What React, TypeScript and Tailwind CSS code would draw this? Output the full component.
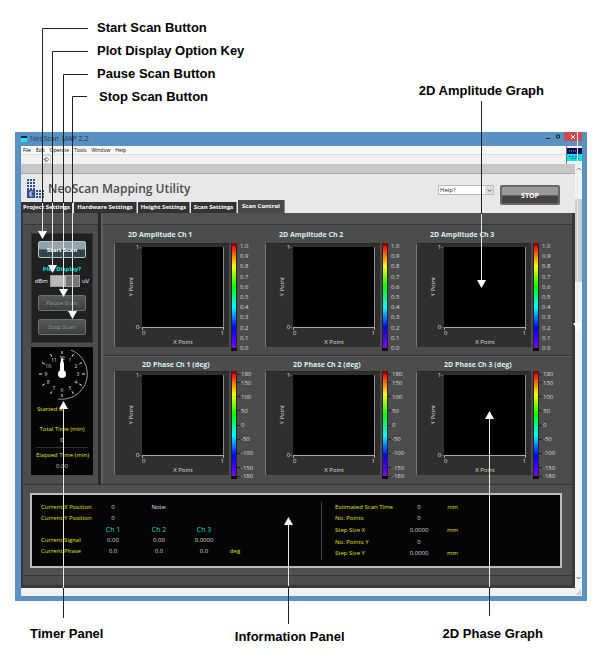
import { Fragment } from 'react'
import clsx from 'clsx'

const MENU = ['File', 'Edit', 'Operate', 'Tools', 'Window', 'Help']

const TABS = [
  { label: 'Project Settings', width: 'w-[52px]' },
  { label: 'Hardware Settings', width: 'w-[63px]' },
  { label: 'Height Settings', width: 'w-[52px]' },
  { label: 'Scan Settings', width: 'w-[46px]' },
  { label: 'Scan Control', width: 'w-[47px]', active: true },
]

const AMPLITUDE_SCALE = [1, 0.9, 0.8, 0.7, 0.6, 0.5, 0.4, 0.3, 0.2, 0.1, 0]
const PHASE_SCALE = [180, 150, 100, 50, 0, -50, -100, -150, -180]

const SIGNALS = [
  { label: 'Current Signal', values: ['0.00', '0.00', '0.0000'], unit: '' },
  { label: 'Current Phase', values: ['0.0', '0.0', '0.0'], unit: 'deg' },
]

const ESTIMATES = [
  { label: 'Estimated Scan Time', value: '0', unit: 'min' },
  { label: 'No. Points', value: '0', unit: '' },
  { label: 'Step Size X', value: '0.0000', unit: 'mm' },
  { label: 'No. Points Y', value: '0', unit: '' },
  { label: 'Step Size Y', value: '0.0000', unit: 'mm' },
]

function Logo() {
  const dots = []
  for (let row = 0; row < 4; row++) {
    for (let col = 0; col < 3; col++) {
      dots.push(<rect key={`a${row}${col}`} x={1 + col * 3} y={row * 3} width="2" height="2" />)
      // lower block is one row shorter than the tower on the left
      if (row < 3) {
        dots.push(<rect key={`b${row}${col}`} x={10 + col * 3} y={11 + row * 3} width="2" height="2" />)
      }
    }
  }
  return (
    <svg width="19" height="20" viewBox="0 0 19 20" className="shrink-0" fill="#2c4f96" aria-hidden="true">
      {dots}
      <rect x="1" y="11" width="8" height="8" />
      <path d="M6.500 13H4v4h2.500M4 15h2" stroke="#e6e6e6" fill="none" />
    </svg>
  )
}

function Clock() {
  const hours = [1, 2, 3, 4, 5, 6, 7, 8, 9, 10, 11, 12]
  return (
    <svg width="56" height="54" viewBox="-28 -27 56 54" role="img" aria-label="Clock">
      <path d="M9-24A25.500 25.500 0 0 1 -4 25" fill="none" stroke="#999" />
      {hours.map((h) => {
        const a = (h * Math.PI) / 6
        const x = Math.sin(a)
        const y = -Math.cos(a)
        return (
          <Fragment key={h}>
            <line x1={x * 20} y1={y * 20} x2={x * 23} y2={y * 23} stroke="#eee" />
            <text x={x * 16} y={y * 16 + 2} fill="#ddd" fontSize="5" textAnchor="middle">
              {h}
            </text>
          </Fragment>
        )
      })}
      <path d="M0-18L2-10V0H-2V-10Z" fill="#fff" />
      <circle r="4" fill="#fff" />
    </svg>
  )
}

function TitleBar() {
  return (
    <div className="flex h-[14px] items-center justify-between pl-[6px] text-[#1f3550]">
      <div className="flex items-center gap-[3px]">
        <svg width="6" height="6" aria-hidden="true">
          <rect width="6" height="6" fill="#00265c" />
          <rect y="2" width="6" height="4" fill="#18e4ef" />
        </svg>
        <span className="text-[7px]">NeoScan</span>
        <span className="text-[7px]">MAP 2.2</span>
      </div>
      <div className="flex h-full items-start">
        <button aria-label="Minimize" className="flex h-[9px] w-[11px] items-center justify-center">
          <svg width="4" height="4"><path d="M0 3.500h4" stroke="#1c2b3c" /></svg>
        </button>
        <button aria-label="Maximize" className="flex h-[9px] w-[11px] items-center justify-center">
          <svg width="5" height="5"><path d="M.5 1h3v3h-3z" fill="none" stroke="#1c2b3c" /></svg>
        </button>
        <button aria-label="Close" className="mr-[5px] flex h-[9px] w-[18px] items-center justify-center bg-[#cc4c4e]">
          <svg width="4" height="4"><path d="M0 0l4 4M4 0l-4 4" stroke="#fff" /></svg>
        </button>
      </div>
    </div>
  )
}

function MenuBar() {
  return (
    <div className="flex h-[18px] bg-[#f1f1f1]">
      <div className="flex-1">
        <nav className="flex h-[9px] items-center gap-[5px] border-b border-[#dedede] bg-[#f8f8f8] pl-[2px] text-[5px] leading-[8px] text-black">
          {MENU.map((item) => (
            <button key={item}>{item}</button>
          ))}
        </nav>
        <button aria-label="Run" className="ml-[21px] flex size-[9px] items-center justify-center border border-[#ccc] bg-white">
          <svg width="7" height="7">
            <path d="M1 3h2V1l3 2.500-3 2.500V4H1z" fill="none" stroke="#444" strokeWidth=".7" />
          </svg>
        </button>
      </div>
      <svg width="16" height="18" className="shrink-0" aria-hidden="true">
        <path d="M0 0h1v18H0z" fill="#777" />
        <path d="M1 2h15v7H1z" fill="#070750" />
        <path d="M1 8h15v7H1z" fill="#00e0ed" />
        <path d="M3 5h10" stroke="#a9a9dc" strokeDasharray="1 1" />
        <path d="M3 10.500h9M5 12.500h8" stroke="#08717c" strokeDasharray="2 1" />
      </svg>
    </div>
  )
}

function Header() {
  return (
    <header className="bg-[#e8e8e8]">
      <div className="h-[10px] border-b border-[#aaa] bg-[#c6c6c6]" />
      <div className="flex h-[39px]">
        <div className="flex flex-1 flex-col justify-between">
          <div className="flex items-center gap-[3px] pt-[5px] pl-[5px]">
            <Logo />
            <h1 className="text-[12px] leading-[18px] font-semibold text-[#4d4d4d]">NeoScan Mapping Utility</h1>
          </div>
          <div role="tablist" className="flex items-end gap-px">
            {TABS.map((tab) => (
              <button
                key={tab.label}
                role="tab"
                aria-selected={!!tab.active}
                className={clsx(
                  'border-r border-[#888] text-center text-[6px] font-bold whitespace-nowrap text-white',
                  tab.width,
                  tab.active ? 'h-[13px] bg-[#484848]' : 'h-[11px] bg-[#323232]',
                )}
              >
                {tab.label}
              </button>
            ))}
          </div>
        </div>
        <div className="flex items-start gap-[6px] pt-[11px] pr-[15px]">
          <select
            aria-label="Help topic"
            className="h-[10px] w-[56px] appearance-none border border-[#bbb] bg-white bg-[linear-gradient(#ddd,#ddd)] bg-[length:8px_100%] bg-right bg-no-repeat pl-px text-[6px] leading-[8px] text-[#222]"
          >
            <option>Help?</option>
          </select>
          <svg width="5" height="4" className="mt-[4px] -ml-[13px]" aria-hidden="true">
            <path d="M.5.5l2 2 2-2" fill="none" stroke="#555" />
          </svg>
          <button className="ml-[2px] h-[20px] w-[60px] rounded-[2px] border-2 border-[#686868] bg-linear-to-b from-[#999] from-50% to-[#444] to-55% pt-[2px] text-[7px] font-bold text-white">
            STOP
          </button>
        </div>
      </div>
    </header>
  )
}

function ScanControls() {
  return (
    <section className="flex h-[110px] flex-col items-center border border-[#333] bg-[#202020] pt-[7px] text-[6px] leading-[8px] text-white">
      <button className="h-[17px] w-[48px] rounded-[2px] border border-[#b2c4cc] bg-linear-to-b from-[#92a2aa] from-45% to-[#32434d] to-55% font-bold">
        Start Scan
      </button>
      <label htmlFor="plot-display" className="mt-[7px] text-[6px] font-bold text-[#00e6e6]">
        Plot Display?
      </label>
      <div className="mt-[2px] flex items-center gap-[2px]">
        <span>dBm</span>
        <input
          id="plot-display"
          type="range"
          min="0"
          max="1"
          defaultValue="0"
          className="h-[12px] w-[30px] appearance-none border border-[#999] bg-[#777] [&::-webkit-slider-thumb]:h-[10px] [&::-webkit-slider-thumb]:w-[15px] [&::-webkit-slider-thumb]:appearance-none [&::-webkit-slider-thumb]:bg-[#b8b8b8]"
        />
        <span>uV</span>
      </div>
      <button disabled className="mt-[8px] h-[16px] w-[48px] rounded-[2px] border border-[#6d7171] bg-linear-to-b from-[#555959] to-[#3c4040] text-[#929696]">
        Pause Scan
      </button>
      <button disabled className="mt-[8px] h-[16px] w-[48px] rounded-[2px] border border-[#6d7171] bg-linear-to-b from-[#555959] to-[#3c4040] text-[#929696]">
        Stop Scan
      </button>
    </section>
  )
}

function TimerPanel() {
  return (
    <section className="flex h-[128px] flex-col items-center bg-[#050505] text-[6px] leading-[8px] text-[#e2e200]">
      <Clock />
      <p className="w-full pt-[4px] pl-[6px]">Started at</p>
      <p className="mt-[12px]">Total Time (min)</p>
      <p className="mt-[3px] text-white">0</p>
      <p className="mt-[3px] w-[52px] border-t border-[#333] pt-[3px] text-center whitespace-nowrap">
        Elapsed Time (min)
      </p>
      <p className="mt-[3px] text-[#ccc]">0.00</p>
    </section>
  )
}

interface PlotProps {
  title: string
  scale: number[]
  phase?: boolean
}

function Plot({ title, scale, phase }: PlotProps) {
  return (
    <figure className="flex flex-col pr-[8px] text-[6px] leading-[6px] text-[#ddd]">
      <figcaption
        className={clsx(
          'pt-px text-[7px] leading-[10px] font-bold text-[#d4f2f2]',
          phase ? 'h-[12px] pl-[28px]' : 'h-[14px] pl-[14px]',
        )}
      >
        {title}
      </figcaption>
      <div className="flex">
        <div className="flex h-[104px] flex-1 border-t border-l border-t-[#262626] border-l-[#777] bg-[#2f2f2f] pt-[3px] pr-[5px]">
          <div className="flex h-[80px] w-[19px] items-center justify-end">
            <span className="rotate-180 [writing-mode:vertical-rl]">Y Point</span>
          </div>
          <div className="-mt-[3px] flex h-[86px] w-[8px] flex-col justify-between pr-px text-right">
            <span>1-</span>
            <span>0-</span>
          </div>
          <div className="flex flex-1 flex-col">
            <div className="h-[80px] border-r border-[#888] bg-black" />
            <div className="h-[3px] border-t border-r border-l border-[#aaa]" />
            <div className="flex justify-between">
              <span>0</span>
              <span>1</span>
            </div>
            <span className="pt-[3px] text-center">X Point</span>
          </div>
        </div>
        {/* colour ramp with its scale */}
        <div className="ml-[2px] h-[108px] w-[6px] border-x border-t-3 border-b-3 border-x-[#222] border-t-[#8e0000] border-b-black bg-[linear-gradient(#ff0000,#ff7f00,#ffff00_20%,#00ff00_40%,#00ffff_60%,#0000ff_80%,#8000ff)]" />
        <div className={clsx('flex w-[20px] flex-col pt-[3px] pb-[3px]', !phase && 'pl-[3px]')}>
          {scale.map((value, i) => (
            <Fragment key={value}>
              {i > 0 && <div style={{ flexGrow: Math.abs(scale[i - 1] - value) }} />}
              <div className="flex h-0 items-center gap-px">
                {phase && <span className="h-px w-[3px] bg-[#222]" />}
                <span>{phase ? value : value.toFixed(1)}</span>
              </div>
            </Fragment>
          ))}
        </div>
      </div>
    </figure>
  )
}

function InformationPanel() {
  return (
    <section className="flex h-[75px] border-2 border-[#bbb] bg-[#050505] text-[6px] leading-[8px] text-[#ddd]">
      <table className="mt-[7px] ml-[9px] h-[54px] w-[203px] table-fixed text-center">
        <colgroup>
          <col className="w-[49px]" />
          <col className="w-[46px]" />
          <col className="w-[46px]" />
          <col className="w-[44px]" />
          <col />
        </colgroup>
        <tbody>
          <tr>
            <th scope="row" className="text-left font-normal whitespace-nowrap text-[#e2e200]">Current X Position</th>
            <td>0</td>
            <td className="text-[#c8f0f0]">Note:</td>
          </tr>
          <tr>
            <th scope="row" className="text-left font-normal whitespace-nowrap text-[#e2e200]">Current Y Position</th>
            <td>0</td>
          </tr>
          <tr className="align-bottom text-[7px] text-[#00dada]">
            <td />
            <th scope="col" className="font-normal">Ch 1</th>
            <th scope="col" className="font-normal">Ch 2</th>
            <th scope="col" className="font-normal">Ch 3</th>
          </tr>
          {SIGNALS.map((row) => (
            <tr key={row.label}>
              <th scope="row" className="text-left font-normal text-[#e2e200]">{row.label}</th>
              {row.values.map((value, i) => (
                <td key={i}>{value}</td>
              ))}
              <td className="text-[#e2e200]">{row.unit}</td>
            </tr>
          ))}
        </tbody>
      </table>
      <div className="mt-[7px] ml-[77px] h-[58px] w-px bg-[#444]" />
      <table className="mt-[6px] ml-[13px] h-[58px] w-[130px] table-fixed text-center">
        <colgroup>
          <col className="w-[63px]" />
          <col className="w-[42px]" />
          <col />
        </colgroup>
        <tbody>
          {ESTIMATES.map((row) => (
            <tr key={row.label}>
              <th scope="row" className="text-left font-normal whitespace-nowrap text-[#e2e200]">{row.label}</th>
              <td>{row.value}</td>
              <td className="text-[#e2e200]">{row.unit}</td>
            </tr>
          ))}
        </tbody>
      </table>
    </section>
  )
}

function ScrollBar() {
  return (
    <div className="flex w-[7px] flex-col items-center bg-[#f4f4f4] pt-[3px]">
      <svg width="5" height="4" aria-hidden="true"><path d="M.5 3l2-2 2 2" fill="none" stroke="#555" /></svg>
      <div className="mt-[28px] h-[83px] w-full bg-[#cdcdcd]" />
      <div className="flex-1" />
      <svg width="5" height="4" className="mb-[8px]" aria-hidden="true"><path d="M.5 1l2 2 2-2" fill="none" stroke="#555" /></svg>
    </div>
  )
}

function ScanWindow() {
  return (
    <main className="mr-[13px] ml-[15px] bg-[#5b91c1] pb-[5px] font-['Open_Sans','Noto_Sans',sans-serif]">
      <TitleBar />
      <div className="mr-[5px] ml-[6px]">
        <MenuBar />
        <div className="flex">
          <div className="min-w-0 flex-1">
            <Header />
            <div className="border-r-3 border-b-3 border-l-2 border-[#35383d] bg-[#4c4c4c]">
              <div className="flex">
                <div className="w-[78px] border-r-3 border-[#292929]">
                  <div className="h-[12px] border-b border-[#363636] bg-[#525252]" />
                  <div className="flex flex-col gap-[4px] pt-[8px] pr-[5px] pb-[9px] pl-[8px]">
                    <ScanControls />
                    <TimerPanel />
                  </div>
                </div>
                <div className="flex-1 border-l-2 border-[#606060]">
                  <div className="h-[12px] border-b border-[#363636] bg-[#525252]" />
                  <div className="grid grid-cols-3 border-b border-[#363636] pt-[4px] pr-[5px] pb-[4px] pl-[11px]">
                    {[1, 2, 3].map((ch) => (
                      <Plot key={ch} title={`2D Amplitude Ch ${ch}`} scale={AMPLITUDE_SCALE} />
                    ))}
                  </div>
                  <div className="grid grid-cols-3 border-t border-[#5a5a5a] pt-[2px] pr-[5px] pl-[11px]">
                    {[1, 2, 3].map((ch) => (
                      <Plot key={ch} title={`2D Phase Ch ${ch} (deg)`} scale={PHASE_SCALE} phase />
                    ))}
                  </div>
                </div>
              </div>
              <div className="border-t border-[#333] bg-[#505050] pt-[8px] pr-[10px] pb-[7px] pl-[7px]">
                <InformationPanel />
              </div>
              <div className="h-[10px] border-t border-[#363636]" />
            </div>
          </div>
          <ScrollBar />
        </div>
        <div className="flex h-[8px] justify-end bg-[#f1f1f1]">
          <svg width="7" height="8" aria-hidden="true"><path d="M6 1v6H1z" fill="#ccc" /></svg>
        </div>
      </div>
    </main>
  )
}

// Leader lines run black over the page and white over the dark panels
function Leaders() {
  return (
    <svg width="600" height="666" className="pointer-events-none absolute top-0 left-0" fill="none" aria-hidden="true">
      <g stroke="#222">
        <path d="M88 28.500H42.500V203M88 51.500H52.500V203M88 74.500H63.500V203M87 96.500H72.500V203" />
        <path d="M481.500 101V214M63.500 588V618M288.500 586V624M489.500 587V616" />
      </g>
      <g stroke="#e8e8e8">
        <path d="M42.500 203V233M52.500 203V267M63.500 203V290M72.500 203V312M481.500 214V281" />
        <path d="M63.500 408V588M288.500 524V586M489.500 418V587M577.500 132V324" />
      </g>
      <g fill="#fff">
        <path d="M38 231h9l-4.500 8zM48 265h9l-4.500 8zM59 289h9l-4.500 8zM68 311h9l-4.500 8z" />
        <path d="M477 280h9l-4.500 8zM573 323h9l-4.500 8z" />
        <path d="M59 409h9l-4.500-8zM284 525h9l-4.500-8zM485 419h9l-4.500-8z" />
      </g>
    </svg>
  )
}

export default function App() {
  return (
    <div className="relative bg-white pb-[20px] font-['Liberation_Sans',Arial,sans-serif]">
      <div className="flex h-[132px] items-start justify-between pr-[56px] pl-[97px] text-[13px] leading-[23px] font-bold text-black">
        <ul className="pt-[16px]">
          <li>Start Scan Button</li>
          <li>Plot Display Option Key</li>
          <li>Pause Scan Button</li>
          <li className="pl-[2px]">Stop Scan Button</li>
        </ul>
        <p className="pt-[79px]">2D Amplitude Graph</p>
      </div>
      <ScanWindow />
      <div className="flex pt-[21px] pr-[57px] pl-[30px] text-[13px] leading-[23px] font-bold text-black">
        <p>Timer Panel</p>
        <p className="ml-auto pt-[3px]">Information Panel</p>
        <p className="ml-[98px]">2D Phase Graph</p>
      </div>
      <Leaders />
    </div>
  )
}
